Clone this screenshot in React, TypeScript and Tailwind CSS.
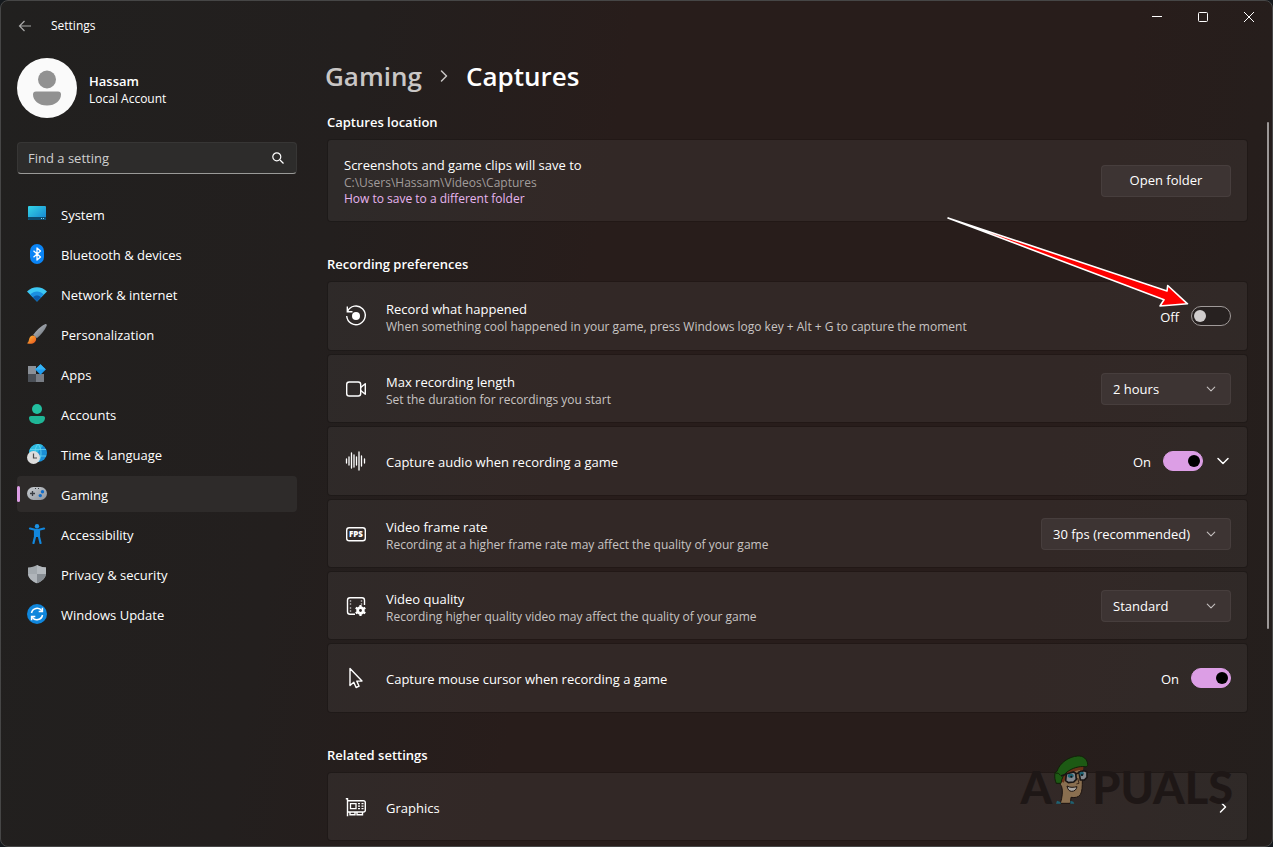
import { useState } from 'react'
import type { ReactNode } from 'react'

function Svg({ size = 20, children }: { size?: number; children: ReactNode }) {
  return (
    <svg width={size} height={size} viewBox={`0 0 ${size} ${size}`} fill="none" aria-hidden="true" className="shrink-0">
      {children}
    </svg>
  )
}

const navItems: { label: string; icon: ReactNode }[] = [
  {
    label: 'System',
    icon: (
      <Svg>
        <defs>
          <linearGradient id="sys" x1="0" y1="0" x2="1" y2="1">
            <stop offset="0" stopColor="#34d6e8" />
            <stop offset="1" stopColor="#1580cf" />
          </linearGradient>
        </defs>
        <rect x="1" y="2" width="18" height="14" rx="1" fill="url(#sys)" />
        <path d="M1 13h18v2a1 1 0 0 1-1 1H2a1 1 0 0 1-1-1z" fill="#0c4a6e" />
        <path d="M14 14.500h1M16 14.500h1" stroke="#7fd6f5" />
      </Svg>
    ),
  },
  {
    label: 'Bluetooth & devices',
    icon: (
      <Svg>
        <rect x="3" y="0" width="14" height="20" rx="7" fill="#0a84f5" />
        <path d="M6.500 6.800l7 6.200-3.500 3V4l3.500 3-7 6.200" stroke="#fff" strokeWidth="1.300" strokeLinejoin="round" />
      </Svg>
    ),
  },
  {
    label: 'Network & internet',
    icon: (
      <Svg>
        <path d="M0 7.500C5.500 1.700 14.500 1.700 20 7.500L10 17.500z" fill="#3cc8f4" />
        <path d="M3.200 10.500c3.800-4 9.800-4 13.600 0L10 17.500z" fill="#1b8fe0" />
        <path d="M6 13.300c2.300-2.300 5.700-2.300 8 0l-4 4.200z" fill="#0b5cad" />
      </Svg>
    ),
  },
  {
    label: 'Personalization',
    icon: (
      <Svg>
        <defs>
          <linearGradient id="brush" x1="0" y1="0" x2="1" y2="1">
            <stop offset="0" stopColor="#c3c8ce" />
            <stop offset="1" stopColor="#5f666e" />
          </linearGradient>
          <linearGradient id="paint" x1="0" y1="0" x2="1" y2="1">
            <stop offset="0" stopColor="#ffc03a" />
            <stop offset="1" stopColor="#e8501c" />
          </linearGradient>
        </defs>
        <path d="M18 .2c1.200-.4 2 .4 1.700 1.600C18 6 14 11 9.800 14.300L6.200 10.800C9.500 6.500 14 1.800 18 .2z" fill="url(#brush)" />
        <path d="M8 12.300c1.800 1.800 1.400 4.300-.3 5.900-2 1.900-5 1.800-7.700 1 1.900-1 1.600-2.500 2.300-4.700.9-2.800 3.800-4.100 5.700-2.200z" fill="url(#paint)" />
      </Svg>
    ),
  },
  {
    label: 'Apps',
    icon: (
      <Svg>
        <rect x="1" y="2" width="8" height="8" fill="#8b9097" />
        <rect x="1" y="10" width="8" height="8" fill="#4b5057" />
        <rect x="9" y="10" width="8" height="8" fill="#787d85" />
        <path d="M13.500.2l5.300 5.300-5.300 5.300-5.300-5.300z" fill="#1e9df0" />
        <path d="M13.500.2l5.300 5.300H8.200z" fill="#35b4f6" />
      </Svg>
    ),
  },
  {
    label: 'Accounts',
    icon: (
      <Svg>
        <circle cx="10" cy="5" r="5" fill="#22bfa0" />
        <path d="M4 12h12c1.200 0 2 .8 2 2 0 3.700-3.500 6-8 6s-8-2.300-8-6c0-1.200.8-2 2-2z" fill="#1fb596" />
      </Svg>
    ),
  },
  {
    label: 'Time & language',
    icon: (
      <Svg>
        <circle cx="11" cy="9" r="9" fill="#1a8fd6" />
        <path d="M2 9a9 9 0 0 1 14-7.500L8 12z" fill="#2fbbe0" />
        <path d="M11 0c-4 4-4 14 0 18M11 0c4 4 4 14 0 18M3 5.500h16M3 12h16" stroke="#67d5f2" strokeWidth=".8" />
        <circle cx="6.500" cy="13.500" r="6.500" fill="#dcdcdc" />
        <path d="M6.500 9.500V14H10" stroke="#4a4a4a" strokeWidth="1.200" />
      </Svg>
    ),
  },
  {
    label: 'Gaming',
    icon: (
      <Svg>
        <defs>
          <linearGradient id="pad" x1="0" y1="0" x2="1" y2="1">
            <stop offset="0" stopColor="#c9cdd2" />
            <stop offset="1" stopColor="#8d939b" />
          </linearGradient>
        </defs>
        <rect y="3" width="20" height="13" rx="6.500" fill="url(#pad)" />
        <path d="M3 9.500h5M5.500 7v5" stroke="#383c42" strokeWidth="1.300" />
        <path d="M8 4.500h1M11 4.500h1" stroke="#383c42" />
        <circle cx="15.500" cy="7.800" r="1.700" fill="#0f6cc9" />
        <circle cx="13.300" cy="11.600" r="1.700" fill="#0f6cc9" />
      </Svg>
    ),
  },
  {
    label: 'Accessibility',
    icon: (
      <Svg>
        <circle cx="10" cy="2.200" r="2.200" fill="#1b93e6" />
        <path d="M3 4.500l5 1.300h4l5-1.300M8 6h4v6H8zM8.300 11.500L6.500 19M11.700 11.500l1.800 7.500" stroke="#1287dd" strokeWidth="2.200" strokeLinecap="round" strokeLinejoin="round" />
        <path d="M7.500 6h5v6.500h-5z" fill="#1287dd" />
      </Svg>
    ),
  },
  {
    label: 'Privacy & security',
    icon: (
      <Svg>
        <path d="M10 1c2.500 1.600 5.500 2.300 9 2.400V9c0 5-3.500 8-9 10.300C4.500 17 1 14 1 9V3.400C4.500 3.300 7.500 2.600 10 1z" fill="#a3a9ae" />
        <path d="M10 1c2.500 1.600 5.500 2.300 9 2.400V9c0 .4 0 .700-.1 1H10z" fill="#b4b9be" />
        <path d="M10 10H1.100C1.700 14.400 5 17.200 10 19.300z" fill="#b0b5ba" />
        <path d="M10 10h8.900c-.6 4.400-3.900 7.200-8.900 9.300z" fill="#878d93" />
      </Svg>
    ),
  },
  {
    label: 'Windows Update',
    icon: (
      <Svg>
        <circle cx="10" cy="10" r="10" fill="#0f86dc" />
        <path d="M4.500 9a5.700 5.700 0 0 1 10.300-2.200M15.500 11a5.700 5.700 0 0 1-10.300 2.200" stroke="#fff" strokeWidth="1.500" />
        <path d="M15.400 3.800v3.700h-3.700M4.600 16.200v-3.700h3.700" stroke="#fff" strokeWidth="1.500" />
      </Svg>
    ),
  },
]

const recordIcon = (
  <Svg size={24}>
    <path d="M3.500 7.500A9.300 9.300 0 1 1 2.700 12M3.300 2.500v5.200h5.200" stroke="#fff" strokeWidth="1.400" />
    <circle cx="12" cy="12" r="4" fill="#fff" />
  </Svg>
)

const cameraIcon = (
  <Svg size={24}>
    <rect x="2.700" y="5" width="14" height="14" rx="2.500" stroke="#fff" strokeWidth="1.400" />
    <path d="M16.700 10.500l4.600-3.800v10.600l-4.600-3.800" stroke="#fff" strokeWidth="1.400" strokeLinejoin="round" />
  </Svg>
)

const audioIcon = (
  <Svg size={24}>
    <path d="M2.500 10v4M5 8v8M7.500 4v15M10 6v12M12.500 8v8M15 3v18M17.500 7v10M20.500 10v4" stroke="#fff" strokeWidth="1.300" strokeLinecap="round" />
  </Svg>
)

const fpsIcon = (
  <Svg size={24}>
    <rect x="2.700" y="5.700" width="18.600" height="13" rx="2.500" stroke="#fff" strokeWidth="1.400" />
    <text x="12" y="15.200" textAnchor="middle" fill="#fff" fontSize="8" fontWeight="800" fontFamily="Open Sans, sans-serif">
      FPS
    </text>
  </Svg>
)

const qualityIcon = (
  <Svg size={24}>
    <path d="M11 20.300H6a2.500 2.500 0 0 1-2.500-2.500V6.200A2.500 2.500 0 0 1 6 3.700h12a2.500 2.500 0 0 1 2.500 2.500V11" stroke="#fff" strokeWidth="1.400" />
    <path d="M6.500 6.500v1M6.500 9.500v1M6.500 13.500v1M6.500 16.500v1M17.500 6.500v1M17.500 9.500v1" stroke="#fff" strokeWidth="1.400" />
    <circle cx="16.500" cy="16.500" r="2.800" stroke="#fff" strokeWidth="2.800" />
    <path d="M16.500 11v11M11.700 13.700l9.600 5.600M11.700 19.300l9.600-5.600" stroke="#fff" strokeWidth="2.200" />
    <circle cx="16.500" cy="16.500" r="1.400" fill="#2f2827" />
  </Svg>
)

const cursorIcon = (
  <Svg size={24}>
    <path d="M6 2.500v17l3.800-3.300 2.300 5.300 3-1.300-2.300-5.100h5.200z" stroke="#fff" strokeWidth="1.400" strokeLinejoin="round" />
  </Svg>
)

const graphicsIcon = (
  <Svg size={24}>
    <path d="M1.800 3.700h1.700v17.600M3.500 5.700h16a1.800 1.800 0 0 1 1.800 1.800v7.700a1.800 1.800 0 0 1-1.800 1.800h-16M6 17v2.800h5V17M13 17v2.800h5.500V17" stroke="#fff" strokeWidth="1.400" />
    <path d="M6.500 8.700h5.500v5H6.500z" stroke="#fff" strokeWidth="1.300" />
    <path d="M14 8.700h2M17.500 8.700h2M14 11.200h2M17.500 11.200h2M14 13.700h2M17.500 13.700h2" stroke="#fff" strokeWidth="1.300" />
  </Svg>
)

function Chevron({ direction, className }: { direction: 'down' | 'right'; className?: string }) {
  return (
    <svg width="16" height="16" viewBox="0 0 16 16" fill="none" stroke="currentColor" aria-hidden="true" className={className}>
      <path d={direction === 'down' ? 'M3 5.500l5 5 5-5' : 'M5.500 3l5 5-5 5'} strokeWidth="1.500" strokeLinecap="round" strokeLinejoin="round" />
    </svg>
  )
}

function Row({ icon, title, text, tall, children }: { icon: ReactNode; title: string; text?: string; tall?: boolean; children: ReactNode }) {
  return (
    <div
      className={`flex items-center rounded border border-black/15 bg-white/5 bg-clip-padding px-4 ${tall ? 'h-[70px]' : 'h-[69px]'}`}
    >
      {icon}
      <div className="ml-[18px] flex-1 pt-0.5">
        <div className="text-[13px] leading-5">{title}</div>
        {text && <div className="text-[12px] leading-4 text-[#c8c4c3]">{text}</div>}
      </div>
      {children}
    </div>
  )
}

function Toggle({ label, initial }: { label: string; initial: boolean }) {
  const [on, setOn] = useState(initial)
  return (
    <label className="flex items-center gap-3 text-[13px] leading-5">
      <span className="pt-0.5">{on ? 'On' : 'Off'}</span>
      <input
        type="checkbox"
        role="switch"
        aria-label={label}
        checked={on}
        onChange={(e) => setOn(e.target.checked)}
        className="flex h-5 w-10 appearance-none items-center rounded-full border border-[#a09a99] bg-[#272120] px-[2px] before:size-3 before:rounded-full before:bg-[#cfcccc] checked:justify-end checked:border-[#dc9ee5] checked:bg-[#dc9ee5] checked:before:bg-black"
      />
    </label>
  )
}

function Dropdown({ label, options, wide }: { label: string; options: string[]; wide?: boolean }) {
  return (
    <div className={wide ? 'relative w-[190px]' : 'relative w-[130px]'}>
      <select
        aria-label={label}
        className="block h-8 w-full appearance-none rounded border border-white/5 bg-[#3d3433] pt-0.5 pl-[11px] text-[13px] text-white"
      >
        {options.map((o) => (
          <option key={o}>{o}</option>
        ))}
      </select>
      <Chevron direction="down" className="pointer-events-none absolute top-2 right-3 size-4 scale-75 text-[#c4bfbe]" />
    </div>
  )
}

function SectionTitle({ children }: { children: ReactNode }) {
  return <h2 className="mb-[7px] text-[13px] leading-5 font-semibold">{children}</h2>
}

function Watermark() {
  return (
    <div
      aria-hidden="true"
      className="pointer-events-none absolute right-[39px] bottom-[34px] flex items-end font-['Lato',sans-serif] text-[45px] leading-[50px] font-black text-[#1e1716]"
    >
      <span>A</span>
      <svg width="37" height="50" viewBox="15 8 111 150" fill="none" className="mr-[3px] mb-2">
        <path d="M28 96c8-4 12 2 16 10 4 12 2 32-4 50h30l2-18c12 2 22 0 28-8 6-10 6-26 6-42l-4-48-30-4-30 18-10 20z" fill="#8a6f50" stroke="#1c1310" strokeWidth="3" />
        <path d="M66 50c12-8 22-12 36-12l8 4-2 16-6 6-4-8-10 2-28 12-10 24-8-4 4-26z" fill="#6b3219" />
        <path d="M24 64c-2 14 0 24 4 32l14 0c2-16 8-26 18-34 16-12 36-18 54-16 4 2 8-2 8-6 0-16-14-28-30-26-26 2-54 20-62 46z" fill="#1d5a14" stroke="#122009" strokeWidth="3" />
        <path d="M26 66c6-2 10 0 14 6" stroke="#122009" strokeWidth="3" />
        <path d="M58 68l22-6 6 4 2 18-8 8-16 2-8-6z" fill="#86898e" stroke="#191514" strokeWidth="5" />
        <path d="M96 62l16-4 8 4 0 16-8 8-12 0z" fill="#86898e" stroke="#191514" strokeWidth="5" />
        <path d="M58 68l-16 6M86 68l10-4" stroke="#191514" strokeWidth="5" />
        <ellipse cx="71" cy="73" rx="9" ry="6" fill="#1f6273" />
        <ellipse cx="104" cy="67" rx="7" ry="6" fill="#1f6273" />
        <circle cx="73" cy="76" r="3" fill="#111" />
        <circle cx="105" cy="71" r="3" fill="#111" />
        <path d="M92 80l4 16-8 2" stroke="#3a2619" strokeWidth="3" />
        <path d="M60 104c10 6 20 4 30 2-2 10-8 14-16 14s-12-6-14-16z" fill="#aaa6a2" stroke="#1c1310" strokeWidth="3" />
        <path d="M30 148l10 4 2 5H27zM70 148l9 3 3 6H70z" fill="#1f6273" />
      </svg>
      <span>PUALS</span>
    </div>
  )
}

export default function App() {
  const [active, setActive] = useState('Gaming')

  return (
    <div className="min-h-screen bg-[#15191d] font-['Open_Sans','Noto_Sans',sans-serif] text-white">
      <div className="relative flex min-h-screen flex-col rounded-lg border border-[#464646] bg-[linear-gradient(100deg,#21201f_0%,#231f1e_26%,#281d1b_45%,#281d1b_80%,#241f1d_100%)]">
        <header className="flex h-[50px] items-start justify-between">
          <div className="flex h-[50px] items-center pl-4">
            <button type="button" aria-label="Back" className="text-[#a8a8a8]">
              <Svg size={16}>
                <path d="M14 8H2.500M7.500 3l-5 5 5 5" stroke="currentColor" strokeWidth="1.200" />
              </Svg>
            </button>
            <span className="ml-[18px] text-[12px]">Settings</span>
          </div>
          <div className="flex">
            <button type="button" aria-label="Minimize" className="flex h-8 w-[46px] items-center justify-center">
              <Svg size={12}>
                <path d="M1 5.500h10" stroke="#fff" />
              </Svg>
            </button>
            <button type="button" aria-label="Maximize" className="flex h-8 w-[46px] items-center justify-center">
              <Svg size={12}>
                <rect x="1.500" y="1.500" width="9" height="9" rx="1" stroke="#fff" />
              </Svg>
            </button>
            <button type="button" aria-label="Close" className="flex h-8 w-[46px] items-center justify-center">
              <Svg size={12}>
                <path d="M1 1l10 10M11 1L1 11" stroke="#fff" />
              </Svg>
            </button>
          </div>
        </header>

        <div className="flex flex-1">
          <aside className="w-[296px] shrink-0 pt-[7px] pl-4">
            <div className="flex items-center gap-3">
              <div className="flex size-[60px] items-center justify-center rounded-full bg-[#fafafa]">
                <svg width="28" height="36" viewBox="0 0 28 36" fill="#919191" aria-hidden="true">
                  <circle cx="14" cy="9.500" r="9" />
                  <path d="M3 21.500h22a3 3 0 0 1 3 3c0 6-5.500 11-14 11s-14-5-14-11a3 3 0 0 1 3-3z" />
                </svg>
              </div>
              <div className="pt-0.5">
                <div className="text-[13px] leading-5 font-semibold">Hassam</div>
                <div className="text-[12px] leading-4">Local Account</div>
              </div>
            </div>

            <div className="relative mt-6">
              <input
                type="text"
                aria-label="Find a setting"
                placeholder="Find a setting"
                className="h-8 w-full rounded border border-b-[#9a9a98] border-white/5 bg-[#2d2c2b] pl-[10px] text-[13px] placeholder:text-[#cfcfcf]"
              />
              <svg width="14" height="14" viewBox="0 0 14 14" fill="none" stroke="#fff" aria-hidden="true" className="absolute top-[9px] right-3">
                <circle cx="5.800" cy="5.800" r="4" strokeWidth="1.200" />
                <path d="M9 9l3.500 3.500" strokeWidth="1.200" />
              </svg>
            </div>

            <nav className="mt-[22px] flex flex-col gap-1">
              {navItems.map((item) => (
                <a
                  key={item.label}
                  href="#"
                  aria-current={active === item.label ? 'page' : undefined}
                  onClick={() => setActive(item.label)}
                  className={
                    active === item.label
                      ? "relative flex h-9 items-center gap-[14px] rounded bg-[#2e2b2a] pl-[10px] before:absolute before:left-0 before:h-4 before:w-[3px] before:rounded-full before:bg-[#dc9ee5]"
                      : 'flex h-9 items-center gap-[14px] rounded pl-[10px]'
                  }
                >
                  {item.icon}
                  <span className="pt-0.5 text-[13px] leading-5">{item.label}</span>
                </a>
              ))}
            </nav>
          </aside>

          <main className="ml-[30px] flex-1 pt-[7px]">
            <h1 className="-ml-0.5 flex h-9 items-center text-[26px] font-semibold">
              <a href="#" className="text-[#c9c6c5]">
                Gaming
              </a>
              <Chevron direction="right" className="mx-[14px] text-[#c9c6c5]" />
              Captures
            </h1>

            <section className="mt-[18px]">
              <SectionTitle>Captures location</SectionTitle>
              <div className="flex h-[83px] items-center justify-between rounded border border-black/15 bg-white/5 bg-clip-padding px-4">
                <div>
                  <div className="text-[13px] leading-5">Screenshots and game clips will save to</div>
                  <div className="text-[12px] leading-4 text-[#a19c9b]">C:\Users\Hassam\Videos\Captures</div>
                  <a href="#" className="block text-[12px] leading-4 text-[#e7b5ef]">
                    How to save to a different folder
                  </a>
                </div>
                <button type="button" className="h-8 w-[130px] rounded border border-white/5 bg-[#3d3433] text-[13px]">
                  Open folder
                </button>
              </div>
            </section>

            <section className="mt-8">
              <SectionTitle>Recording preferences</SectionTitle>
              <div className="flex flex-col gap-[3px]">
                <Row
                  icon={recordIcon}
                  title="Record what happened"
                  text="When something cool happened in your game, press Windows logo key + Alt + G to capture the moment"
                  tall
                >
                  <Toggle label="Record what happened" initial={false} />
                </Row>
                <Row icon={cameraIcon} title="Max recording length" text="Set the duration for recordings you start">
                  <Dropdown label="Max recording length" options={['2 hours', '1 hour', '30 minutes']} />
                </Row>
                <Row icon={audioIcon} title="Capture audio when recording a game" tall>
                  <Toggle label="Capture audio" initial={true} />
                  <button type="button" aria-label="Expand" className="ml-3">
                    <Chevron direction="down" />
                  </button>
                </Row>
                <Row icon={fpsIcon} title="Video frame rate" text="Recording at a higher frame rate may affect the quality of your game">
                  <Dropdown label="Video frame rate" options={['30 fps (recommended)', '60 fps']} wide />
                </Row>
                <Row icon={qualityIcon} title="Video quality" text="Recording higher quality video may affect the quality of your game">
                  <Dropdown label="Video quality" options={['Standard', 'High']} />
                </Row>
                <Row icon={cursorIcon} title="Capture mouse cursor when recording a game" tall>
                  <Toggle label="Capture mouse cursor" initial={true} />
                </Row>
              </div>
            </section>

            <section className="mt-8">
              <SectionTitle>Related settings</SectionTitle>
              <Row icon={graphicsIcon} title="Graphics">
                <Chevron direction="right" />
              </Row>
            </section>
          </main>

          <div className="mt-[71px] mr-[3px] ml-[19px] h-[507px] w-[2px] shrink-0 rounded-full bg-[#9c9897]" />
        </div>

        <Watermark />

        <svg
          width="246"
          height="98"
          viewBox="944 213 246 98"
          aria-hidden="true"
          className="pointer-events-none absolute top-[212px] right-[82px]"
        >
          <path d="M948 218L1167 291l.7-5.500L1187.500 303.800 1160 306l4-6.300z" fill="#f00" stroke="#fff" strokeWidth="1.600" strokeLinejoin="round" />
        </svg>
      </div>
    </div>
  )
}
